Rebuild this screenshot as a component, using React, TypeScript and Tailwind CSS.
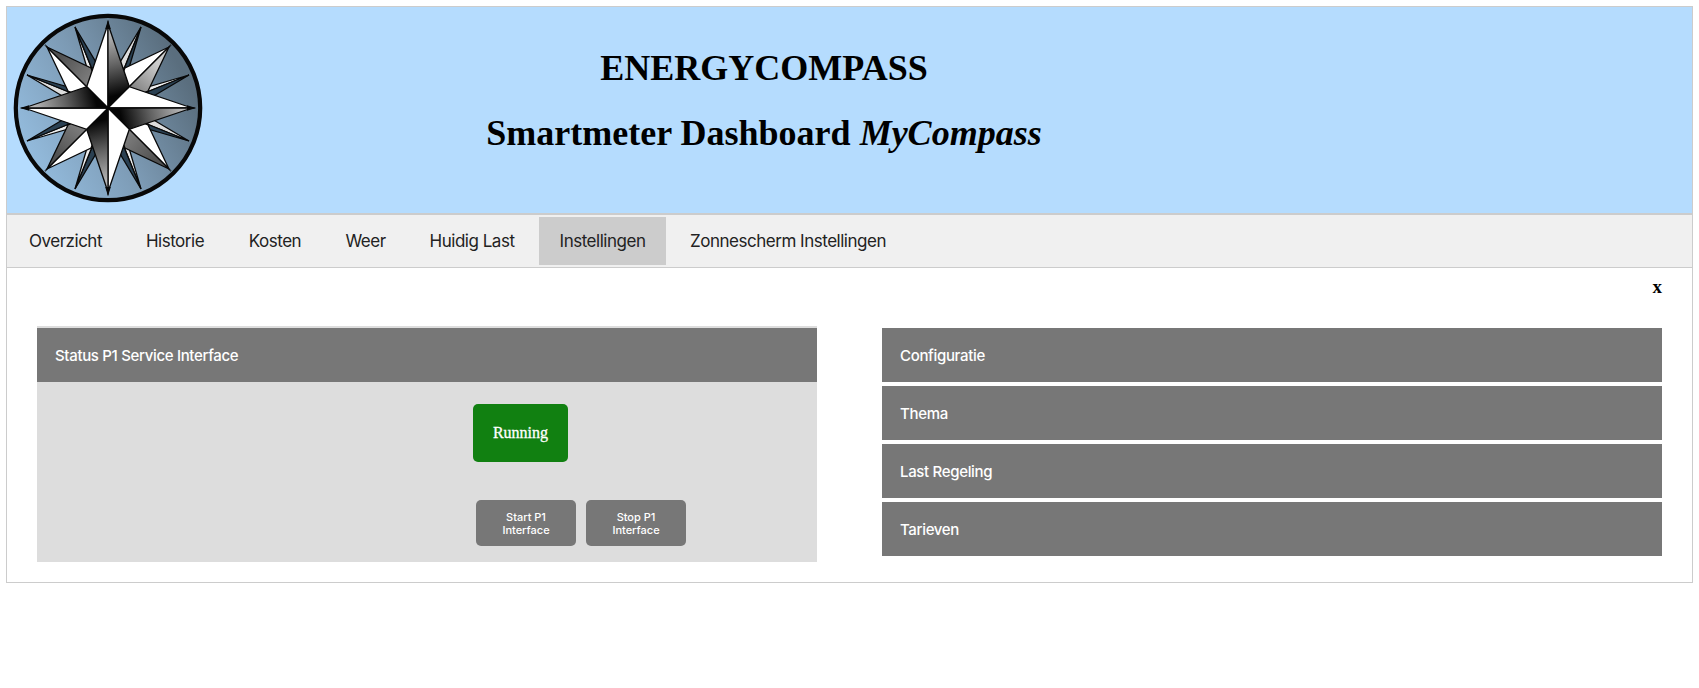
import React from "react";

const tabs = [
  { label: "Overzicht", cls: "w-[113px]" },
  { label: "Historie", cls: "w-[98px]" },
  { label: "Kosten", cls: "w-[94px]" },
  { label: "Weer", cls: "w-[79px]" },
  { label: "Huidig Last", cls: "w-[126px]" },
  { label: "Instellingen", cls: "w-[127px] bg-[#ccc]" },
  { label: "Zonnescherm Instellingen", cls: "w-[236px]" },
];

// The rose is four-fold symmetric: each ray is drawn once and turned by these angles.
const quarters = [0, 90, 180, 270];

function Compass() {
  return (
    <svg
      className="block size-[190px]"
      viewBox="-95 -95 190 190"
      stroke="#080808"
      strokeWidth="1.3"
      strokeLinejoin="miter"
      strokeMiterlimit="9"
    >
      <defs>
        <linearGradient id="disc" x1="0" y1="0.65" x2="0.85" y2="0.2">
          <stop offset="0" stopColor="#94bcde" />
          <stop offset="0.5" stopColor="#7c9ab4" />
          <stop offset="1" stopColor="#5a6e7e" />
        </linearGradient>
        <linearGradient id="shade" gradientUnits="userSpaceOnUse" x1="0" y1="-72" x2="14" y2="-14">
          <stop offset="0" stopColor="#b4b4b4" />
          <stop offset="0.5" stopColor="#626262" />
          <stop offset="1" stopColor="#050505" />
        </linearGradient>
        <linearGradient id="northEast" gradientUnits="userSpaceOnUse" x1="24" y1="-18" x2="48" y2="-45">
          <stop offset="0" stopColor="#808080" />
          <stop offset="1" stopColor="#ccc" />
        </linearGradient>
        <linearGradient id="diagonal" gradientUnits="userSpaceOnUse" x1="24" y1="-18" x2="50" y2="-50">
          <stop offset="0" stopColor="#808080" />
          <stop offset="1" stopColor="#505050" />
        </linearGradient>
      </defs>
      <circle r="92.2" fill="url(#disc)" strokeWidth="4.2" />
      {quarters.map((a) => (
        <g key={a} transform={`rotate(${a})`}>
          <path d="M-33-81 L-21-40 L-16-39Z" fill="#eee" />
          <path d="M-33-81 L-16-39 L-11-44Z" fill="#2a4052" />
          <path d="M33-81 L11-44 L16-39Z" fill={a === 180 ? "#2a4052" : "#ddd"} />
          <path d="M33-81 L16-39 L21-40Z" fill={a === 180 ? "#eee" : "#2a4052"} />
        </g>
      ))}
      {quarters.map((a) => (
        <g key={a} transform={`rotate(${a})`}>
          <path d="M61-61 L17-40 L0 0Z" fill="#fff" />
          <path d="M61-61 L40-17 L0 0Z" fill={a === 0 ? "url(#northEast)" : "url(#diagonal)"} />
        </g>
      ))}
      {quarters.map((a) => (
        <g key={a} transform={`rotate(${a})`}>
          <path d="M0-84 L-21.3-21.3 L0 0Z" fill="#fff" />
          <path d="M0-84 L21.3-21.3 L0 0Z" fill="url(#shade)" />
          <path d="M0-88 L-2.8-79 L2.8-79Z" fill="#080808" stroke="none" />
        </g>
      ))}
    </svg>
  );
}

const bar =
  "flex h-[54px] items-center bg-[#777] pt-[2px] pl-[18px] text-[15px] font-medium tracking-[-0.33px] text-white";
const action = "h-[46px] w-[100px] rounded-[5px] bg-[#777] px-[20px] pt-[2px]";

export default function App() {
  return (
    <div className="h-[688px] bg-white pt-[6px] pl-[6px] font-['Inter','Liberation_Sans',sans-serif] text-black">
      <div className="h-[577px] w-[1687px] border border-[#ccc]">
        <header className="flex h-[206px] bg-[#b5dcfe] pt-[6px] pl-[6px]">
          <Compass />
          <div className="ml-[261px] flex w-[600px] flex-col items-center pt-[33px] font-['Liberation_Serif',serif] text-[36px] leading-[44px] font-bold whitespace-nowrap">
            <h1>ENERGYCOMPASS</h1>
            <h1 className="mt-[21px]">
              Smartmeter Dashboard <i>MyCompass</i>
            </h1>
          </div>
        </header>
        <nav className="flex h-[55px] gap-[4px] border-t-2 border-b border-[#ccc] bg-[#f0f0f0] pt-[2px] pl-[2px] text-[17px] tracking-[-0.48px] text-[#222]">
          {tabs.map((t) => (
            <button key={t.label} className={`h-[48px] shrink-0 pt-[2px] whitespace-nowrap ${t.cls}`}>
              {t.label}
            </button>
          ))}
        </nav>
        <div className="flex h-[58px] justify-end pt-[9px] pr-[30px] font-['Liberation_Serif',serif] text-[19px] leading-5 font-bold">
          x
        </div>
        <main className="flex gap-[65px] pl-[30px]">
          <section className="h-[236px] w-[780px] bg-[#ddd] pt-[2px]">
            <div className={bar}>Status P1 Service Interface</div>
            <div className="mt-[22px] ml-[436px] flex h-[58px] w-[95px] items-center justify-center rounded-[5px] bg-[#118011] font-['Liberation_Serif',serif] text-base text-white [-webkit-text-stroke:0.3px_white]">
              Running
            </div>
            <div className="mt-[38px] ml-[439px] flex gap-[10px] text-[11px] leading-[13px] font-medium text-white">
              <button className={action}>Start P1 Interface</button>
              <button className={action}>Stop P1 Interface</button>
            </div>
          </section>
          <section className="flex w-[780px] flex-col gap-[4px] pt-[2px]">
            {["Configuratie", "Thema", "Last Regeling", "Tarieven"].map((l) => (
              <div key={l} className={bar}>
                {l}
              </div>
            ))}
          </section>
        </main>
      </div>
    </div>
  );
}
